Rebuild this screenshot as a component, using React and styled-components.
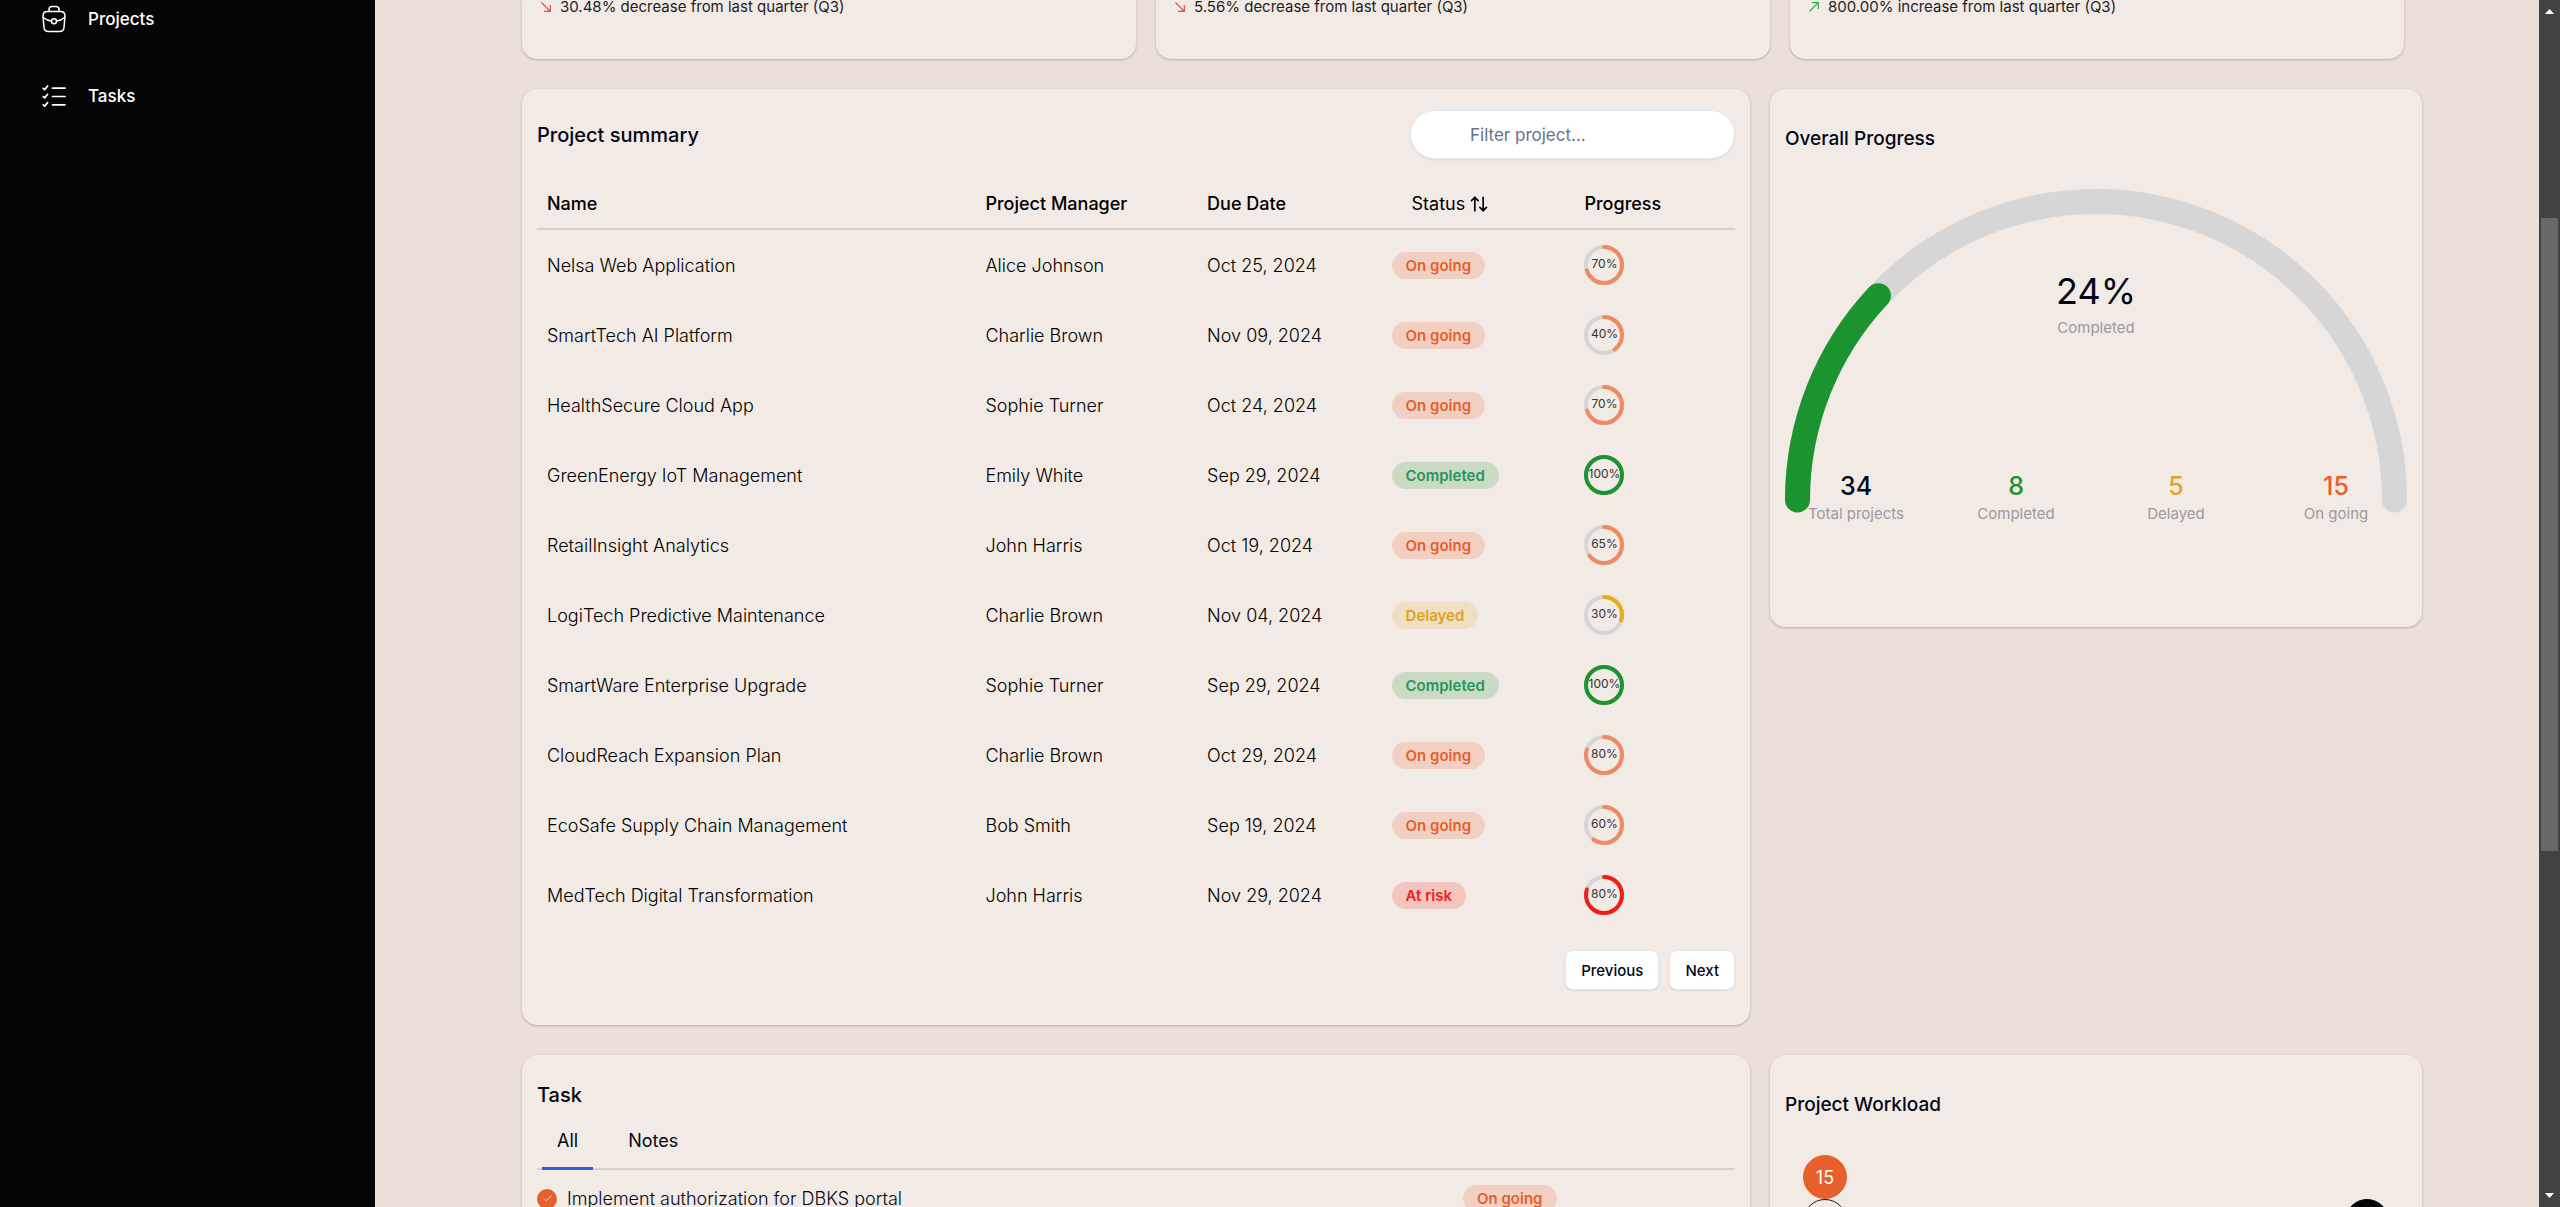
import React from "react";
import styled, { createGlobalStyle } from "styled-components";
import { ArrowUpDown, Check } from "lucide-react";

const colors = {
  ink: "#020817",
  page: "#ebdfd7",
  card: "#f2eae4",
  line: "#d9cfcd",
  track: "#d6d6d6",
  muted: "#9b9b9b",
  orange: "#e75f2b",
  green: "#1b932e",
  yellow: "#e3a51d",
};

const statusStyles = {
  "On going": { text: "#e75f2b", fill: "#f1d0c3", ring: "#ef8a62" },
  Completed: { text: "#27945a", fill: "#cadac5", ring: "#1b932e" },
  Delayed: { text: "#e0a220", fill: "#efdfc4", ring: "#e6ae1f" },
  "At risk": { text: "#f21d1d", fill: "#f3c5c0", ring: "#f01d1a" },
};

const projects = [
  ["Nelsa Web Application", "Alice Johnson", "Oct 25, 2024", "On going", 70],
  ["SmartTech AI Platform", "Charlie Brown", "Nov 09, 2024", "On going", 40],
  ["HealthSecure Cloud App", "Sophie Turner", "Oct 24, 2024", "On going", 70],
  ["GreenEnergy IoT Management", "Emily White", "Sep 29, 2024", "Completed", 100],
  ["RetailInsight Analytics", "John Harris", "Oct 19, 2024", "On going", 65],
  ["LogiTech Predictive Maintenance", "Charlie Brown", "Nov 04, 2024", "Delayed", 30],
  ["SmartWare Enterprise Upgrade", "Sophie Turner", "Sep 29, 2024", "Completed", 100],
  ["CloudReach Expansion Plan", "Charlie Brown", "Oct 29, 2024", "On going", 80],
  ["EcoSafe Supply Chain Management", "Bob Smith", "Sep 19, 2024", "On going", 60],
  ["MedTech Digital Transformation", "John Harris", "Nov 29, 2024", "At risk", 80],
];

const trends = [
  { text: "30.48% decrease from last quarter (Q3)", up: false },
  { text: "5.56% decrease from last quarter (Q3)", up: false },
  { text: "800.00% increase from last quarter (Q3)", up: true },
];

const totals = [
  { value: 34, label: "Total projects", color: colors.ink },
  { value: 8, label: "Completed", color: colors.green },
  { value: 5, label: "Delayed", color: colors.yellow },
  { value: 15, label: "On going", color: colors.orange },
];

const GlobalStyle = createGlobalStyle`
  *, *::before, *::after { box-sizing: border-box; }
  body {
    margin: 0;
    overflow: hidden;
    font-family: Inter, "Liberation Sans", sans-serif;
    color: ${colors.ink};
  }
  h2, p { margin: 0; }
  button, input { font-family: inherit; color: inherit; }
`;

const Shell = styled.div`
  display: flex;
  height: 100vh;
  overflow: hidden;
  background: ${colors.page};
`;

const Sidebar = styled.nav`
  flex: 0 0 375px;
  display: flex;
  flex-direction: column;
  gap: 49px;
  padding: 5px 42px;
  background: #050505;
`;

const NavLink = styled.a`
  display: flex;
  align-items: center;
  gap: 22px;
  height: 28px;
  color: #fff;
  font-size: 17px;
  font-weight: 500;
  text-decoration: none;
`;

const Main = styled.main`
  flex: 1;
  min-width: 0;
  display: flex;
  flex-direction: column;
  gap: 30px;
  padding: 0 117px 0 147px;
`;

const Card = styled.section`
  background: ${colors.card};
  border-radius: 15px;
  box-shadow: 0 1px 3px rgba(0, 0, 0, 0.14), 0 1px 2px rgba(0, 0, 0, 0.1);
`;

const TrendRow = styled.div`
  display: grid;
  grid-template-columns: repeat(3, 1fr);
  gap: 20px;
  padding-right: 18px;
`;

const TrendCard = styled(Card)`
  display: flex;
  align-items: center;
  gap: 9px;
  padding: 0 19px 45px;
  border-radius: 0 0 15px 15px;
  font-size: 15px;
  line-height: 14px;
  color: #1c1c28;
`;

const Columns = styled.div`
  display: grid;
  grid-template-columns: 1228fr 652fr;
  gap: 30px 20px;
  align-items: start;
`;

const SummaryCard = styled(Card)`
  padding: 21px 15px 35px;
`;

const SummaryHead = styled.header`
  display: flex;
  justify-content: space-between;
  align-items: center;
  margin-bottom: 20px;
`;

const Title = styled.h2`
  font-size: ${(p) => (p.$compact ? "19px" : "20px")};
  font-weight: 500;
  line-height: 30px;
`;

const FilterInput = styled.input`
  width: 325px;
  height: 49px;
  padding: 0 20px 0 59px;
  border: 1px solid #e2e8f0;
  border-radius: 25px;
  background: #fff;
  box-shadow: 0 1px 2px rgba(0, 0, 0, 0.08);
  font-size: 17px;
  &::placeholder {
    color: #64748b;
    opacity: 1;
  }
`;

const Table = styled.table`
  width: 100%;
  table-layout: fixed;
  border-collapse: separate;
  border-spacing: 0;
  color: #000;
  font-size: 18px;
  font-weight: 300;
`;

const HeadCell = styled.th`
  width: ${(p) => p.$width};
  height: 51px;
  padding: 0 10px;
  border-bottom: 2px solid ${colors.line};
  font-weight: 500;
  text-align: left;
`;

const Cell = styled.td`
  height: 70px;
  padding: 0 10px;
`;

const SortButton = styled.button`
  display: flex;
  align-items: center;
  gap: 4px;
  padding: 0 20px;
  border: 0;
  background: none;
  font-size: 18px;
  font-weight: 400;
`;

const Pill = styled.span`
  display: inline-flex;
  align-items: center;
  height: 27px;
  padding: 0 14px;
  border-radius: 14px;
  background: ${(p) => statusStyles[p.$status].fill};
  color: ${(p) => statusStyles[p.$status].text};
  font-size: 15px;
  font-weight: 600;
`;

const RingBox = styled.div`
  display: grid;
  place-items: center;
  width: 40px;
  height: 40px;
  > * {
    grid-area: 1 / 1;
  }
`;

const RingLabel = styled.span`
  font-size: 12px;
  font-weight: 400;
  line-height: 14px;
  padding-bottom: 2px;
  color: #333;
`;

const Pager = styled.div`
  display: flex;
  justify-content: flex-end;
  gap: 10px;
  margin-top: 20px;
`;

const PagerButton = styled.button`
  height: 40px;
  padding: 0 15px;
  border: 1px solid #e2e8f0;
  border-radius: 8px;
  background: #fff;
  box-shadow: 0 1px 2px rgba(0, 0, 0, 0.08);
  font-size: 15px;
  font-weight: 500;
`;

const SideCard = styled(Card)`
  padding: 35px 15px 103px;
`;

const GaugeArea = styled.div`
  display: grid;
  margin-top: 35px;
  > * {
    grid-area: 1 / 1;
  }
`;

const GaugeDrawing = styled.svg`
  width: 100%;
  height: auto;
`;

const GaugeText = styled.div`
  display: flex;
  flex-direction: column;
  margin: 0 -9px;
  padding-top: 82px;
  text-align: center;
`;

const BigValue = styled.p`
  font-size: 36px;
  line-height: 40px;
`;

const Caption = styled.p`
  color: ${colors.muted};
  font-size: 15px;
  line-height: 20px;
`;

const GaugeHeadline = styled.div`
  display: grid;
  gap: 7px;
  margin-bottom: 131px;
`;

const Totals = styled.div`
  display: grid;
  grid-template-columns: repeat(4, 1fr);
`;

const TotalValue = styled.p`
  color: ${(p) => p.$color};
  font-size: 25px;
  font-weight: 500;
  line-height: 35px;
`;

const TaskCard = styled(Card)`
  padding: 25px 15px 35px;
`;

const Tabs = styled.div`
  display: flex;
  gap: 20px;
  margin-bottom: 15px;
  padding: 0 5px;
  border-bottom: 2px solid ${colors.line};
`;

const Tab = styled.button`
  height: 60px;
  margin-bottom: -2px;
  padding: 4px 15px 0;
  border: 0;
  border-bottom: 3px solid ${(p) => (p.$active ? "#2f5be7" : "transparent")};
  background: none;
  font-size: 18px;
`;

const TaskRow = styled.div`
  display: grid;
  grid-template-columns: 20px 1fr 272px;
  align-items: center;
  column-gap: 10px;
  font-size: 18px;
  font-weight: 300;
`;

const CheckWrap = styled.span`
  display: grid;
  place-items: center;
  color: #fbd3c3;
  > * {
    grid-area: 1 / 1;
  }
  svg {
    pointer-events: none;
  }
`;

const CheckInput = styled.input`
  appearance: none;
  width: 20px;
  height: 20px;
  margin: 0;
  border-radius: 50%;
  background: ${colors.orange};
`;

const Workload = styled.div`
  display: flex;
  justify-content: space-between;
  margin-top: 35px;
  padding: 0 18px;
`;

const Stack = styled.div`
  display: flex;
  flex-direction: column;
  justify-content: flex-end;
`;

const Dot = styled.span`
  display: grid;
  place-items: center;
  width: 44px;
  height: 44px;
  border: 1px solid ${(p) => p.$border || p.$fill};
  border-radius: 50%;
  background: ${(p) => p.$fill};
  color: #fff;
  font-size: 18px;
`;

const ScrollRail = styled.div`
  flex: 0 0 21px;
  display: grid;
  grid-template-rows: 218fr 633fr 356fr;
  justify-items: center;
  background: #424242;
`;

const ScrollThumb = styled.div`
  width: 17px;
  background: #686868;
`;

const ScrollArrow = styled.svg`
  width: 9px;
  height: 5px;
  margin: 9px 0;
  align-self: ${(p) => (p.$end ? "end" : "start")};
`;

function BagIcon() {
  return (
    <svg width="24" height="28" viewBox="0 0 24 28" fill="none" stroke="currentColor" strokeWidth="1.5" strokeLinecap="round" strokeLinejoin="round" aria-hidden="true">
      <path d="M7 6V4.5Q7 1.5 10 1.5h4q3 0 3 3V6" />
      <path d="M5.500 6.500h13q4.500 0 4.500 4.500l-1 11.500q-.4 4-4.400 4H6.400q-4 0-4.400-4L1 11q0-4.500 4.500-4.500Z" />
      <path d="M1.300 12.500Q5 15.600 9.400 16M22.700 12.500Q19 15.600 14.600 16" />
      <circle cx="12" cy="16.200" r="2.500" />
    </svg>
  );
}

function ChecklistIcon() {
  return (
    <svg width="24" height="24" viewBox="0 0 24 24" fill="none" stroke="currentColor" strokeWidth="1.700" strokeLinecap="round" strokeLinejoin="round" aria-hidden="true">
      <path d="M1.200 4.300l1.500 1.300L5.600 2M10.500 4.200h12.500" />
      <path d="M1.200 12.600l1.500 1.300L5.600 10.300M10.500 12.500h12.500" />
      <path d="M1.200 20.900l1.500 1.300L5.600 18.600M10.500 20.800h12.500" />
    </svg>
  );
}

function TrendIcon({ up }) {
  return (
    <svg width="10" height="10" viewBox="0 0 10 10" fill="none" stroke={up ? "#2fa84a" : "#ee4444"} strokeWidth="1.200" aria-hidden="true">
      <path d={up ? "M.5 9.500L9.300.700M3 .700h6.300V7" : "M.5.500l8.800 8.800M3 9.300h6.300V3"} />
    </svg>
  );
}

function Ring({ value, color }) {
  return (
    <RingBox>
      <svg width="40" height="40" viewBox="0 0 40 40" fill="none" strokeWidth="4" aria-hidden="true">
        <circle cx="20" cy="20" r="18" stroke={colors.track} />
        <circle cx="20" cy="20" r="18" stroke={color} strokeLinecap="round" pathLength="100" strokeDasharray={`${value} 100`} transform="rotate(-90 20 20)" />
      </svg>
      <RingLabel>{value}%</RingLabel>
    </RingBox>
  );
}

function Gauge({ value }) {
  const arc = "M12.500 311A298.500 298.500 0 0 1 609.500 311";
  return (
    <GaugeDrawing viewBox="0 0 622 324" fill="none" strokeWidth="25" strokeLinecap="round" aria-hidden="true">
      <path d={arc} stroke={colors.track} />
      <path d={arc} stroke={colors.green} pathLength="100" strokeDasharray={`${value} 200`} />
    </GaugeDrawing>
  );
}

export default function App() {
  return (
    <>
      <GlobalStyle />
      <Shell>
        <Sidebar>
          <NavLink href="#projects"><BagIcon />Projects</NavLink>
          <NavLink href="#tasks"><ChecklistIcon />Tasks</NavLink>
        </Sidebar>
        <Main>
          <TrendRow>
            {trends.map((t) => (
              <TrendCard key={t.text}>
                <TrendIcon up={t.up} />
                {t.text}
              </TrendCard>
            ))}
          </TrendRow>
          <Columns>
            <SummaryCard>
              <SummaryHead>
                <Title>Project summary</Title>
                <FilterInput type="text" placeholder="Filter project..." aria-label="Filter project" />
              </SummaryHead>
              <Table>
                <thead>
                  <tr>
                    <HeadCell $width="36.6%">Name</HeadCell>
                    <HeadCell $width="18.5%">Project Manager</HeadCell>
                    <HeadCell $width="15.4%">Due Date</HeadCell>
                    <HeadCell $width="16.1%">
                      <SortButton type="button">Status <ArrowUpDown size={20} /></SortButton>
                    </HeadCell>
                    <HeadCell $width="13.4%">Progress</HeadCell>
                  </tr>
                </thead>
                <tbody>
                  {projects.map(([name, manager, due, status, progress]) => (
                    <tr key={name}>
                      <Cell>{name}</Cell>
                      <Cell>{manager}</Cell>
                      <Cell>{due}</Cell>
                      <Cell><Pill $status={status}>{status}</Pill></Cell>
                      <Cell><Ring value={progress} color={statusStyles[status].ring} /></Cell>
                    </tr>
                  ))}
                </tbody>
              </Table>
              <Pager>
                <PagerButton type="button">Previous</PagerButton>
                <PagerButton type="button">Next</PagerButton>
              </Pager>
            </SummaryCard>

            <SideCard>
              <Title $compact>Overall Progress</Title>
              <GaugeArea>
                <Gauge value={24} />
                <GaugeText>
                  <GaugeHeadline>
                    <BigValue>24%</BigValue>
                    <Caption>Completed</Caption>
                  </GaugeHeadline>
                  <Totals>
                    {totals.map((t) => (
                      <div key={t.label}>
                        <TotalValue $color={t.color}>{t.value}</TotalValue>
                        <Caption>{t.label}</Caption>
                      </div>
                    ))}
                  </Totals>
                </GaugeText>
              </GaugeArea>
            </SideCard>

            <TaskCard>
              <Title>Task</Title>
              <Tabs role="tablist">
                <Tab type="button" role="tab" aria-selected="true" $active>All</Tab>
                <Tab type="button" role="tab" aria-selected="false">Notes</Tab>
              </Tabs>
              <TaskRow>
                <CheckWrap>
                  <CheckInput id="task-dbks" type="checkbox" defaultChecked />
                  <Check size={11} strokeWidth={2} />
                </CheckWrap>
                <label htmlFor="task-dbks">Implement authorization for DBKS portal</label>
                <span><Pill $status="On going">On going</Pill></span>
              </TaskRow>
            </TaskCard>

            <SideCard>
              <Title $compact>Project Workload</Title>
              <Workload>
                <Stack>
                  <Dot $fill={colors.orange}>15</Dot>
                  <Dot $fill="transparent" $border="#1a1a1a" />
                </Stack>
                <Stack>
                  <Dot $fill="#050505" />
                </Stack>
              </Workload>
            </SideCard>
          </Columns>
        </Main>
        <ScrollRail aria-hidden="true">
          <ScrollArrow viewBox="0 0 9 5"><path d="M4.500 0L9 5H0Z" fill="#fff" /></ScrollArrow>
          <ScrollThumb />
          <ScrollArrow $end viewBox="0 0 9 5"><path d="M0 0h9L4.500 5Z" fill="#fff" /></ScrollArrow>
        </ScrollRail>
      </Shell>
    </>
  );
}
